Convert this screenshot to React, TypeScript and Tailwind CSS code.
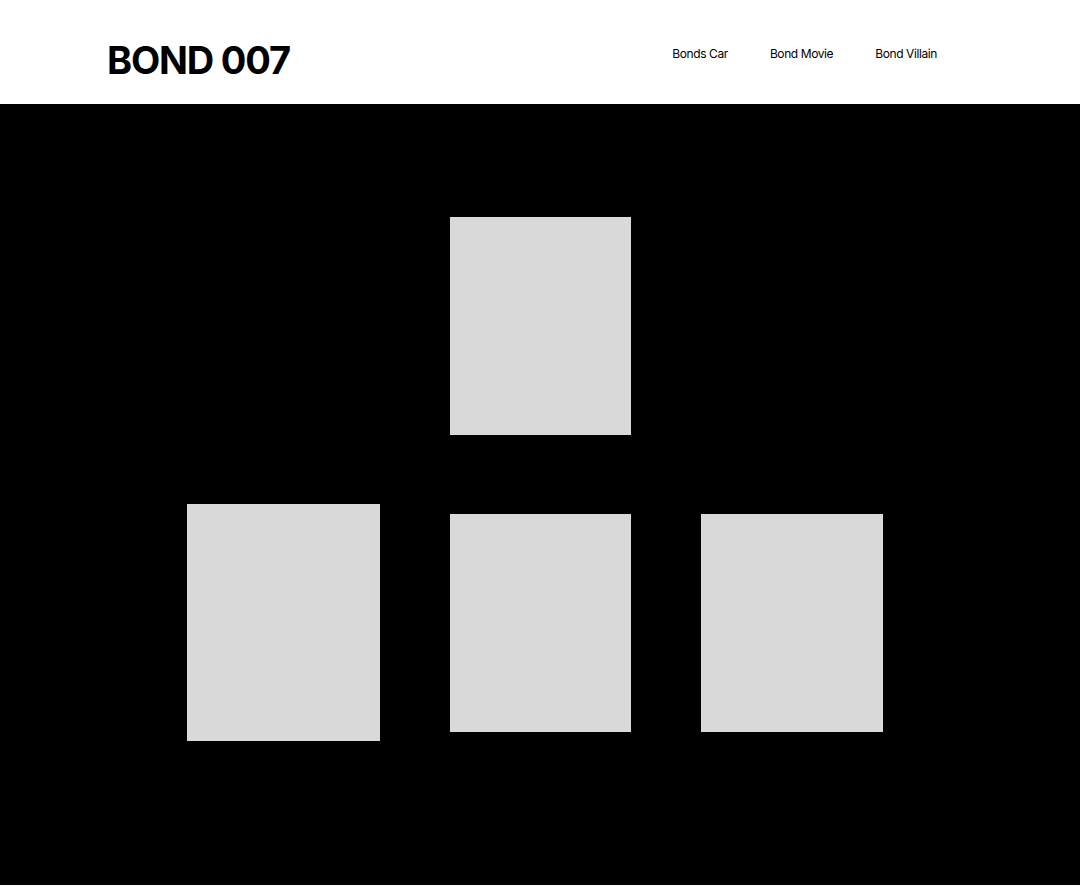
import React from "react";

export default function App() {
  return (
    <div className="w-[1080px] h-[886px] bg-white" style={{ fontFamily: "Inter, 'Liberation Sans', sans-serif" }}>
      <header className="h-[104px] flex justify-between pl-[107px] pr-[143px]">
        <h1 className="pt-[37px] text-[38px] leading-[46px] font-bold text-black tracking-[-1.2px]">BOND 007</h1>
        <nav className="flex gap-[42px] pt-[46px] text-[12px] leading-[16px] text-black tracking-[-0.4px]">
          <a>Bonds Car</a>
          <a>Bond Movie</a>
          <a>Bond Villain</a>
        </nav>
      </header>
      <section className="h-[781px] bg-black flex flex-col pt-[113px]">
        <div className="mx-auto w-[181px] h-[218px] bg-[#d9d9d9]" />
        <div className="mt-[69px] flex items-center gap-[70px] pl-[187px]">
          <div className="w-[193px] h-[237px] bg-[#d9d9d9]" />
          <div className="w-[181px] h-[218px] bg-[#d9d9d9]" />
          <div className="w-[182px] h-[218px] bg-[#d9d9d9]" />
        </div>
      </section>
    </div>
  );
}
